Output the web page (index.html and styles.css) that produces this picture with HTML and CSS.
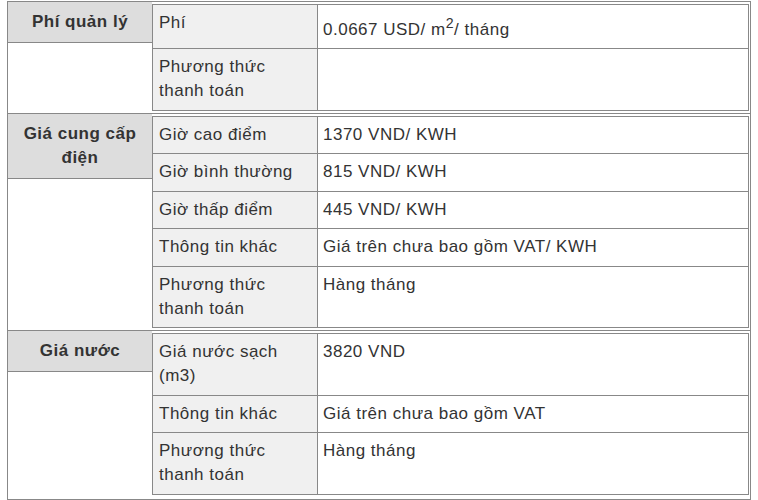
FILE: index.html
```html
<!DOCTYPE html>
<html lang="vi">
<head>
<meta charset="utf-8">
<title>Bảng phí</title>
<link rel="stylesheet" href="styles.css">
</head>
<body>
<div class="sheet">
  <section class="group">
    <div class="label">Phí quản lý</div>
    <div class="detail">
      <div class="key">Phí</div>
      <div class="val">0.0667 USD/ m<sup>2</sup>/ tháng</div>
      <div class="key">Phương thức thanh toán</div>
      <div class="val"></div>
    </div>
  </section>
  <section class="group">
    <div class="label">Giá cung cấp điện</div>
    <div class="detail">
      <div class="key">Giờ cao điểm</div>
      <div class="val">1370 VND/ KWH</div>
      <div class="key">Giờ bình thường</div>
      <div class="val">815 VND/ KWH</div>
      <div class="key">Giờ thấp điểm</div>
      <div class="val">445 VND/ KWH</div>
      <div class="key">Thông tin khác</div>
      <div class="val">Giá trên chưa bao gồm VAT/ KWH</div>
      <div class="key">Phương thức thanh toán</div>
      <div class="val">Hàng tháng</div>
    </div>
  </section>
  <section class="group">
    <div class="label">Giá nước</div>
    <div class="detail">
      <div class="key">Giá nước sạch (m3)</div>
      <div class="val">3820 VND</div>
      <div class="key">Thông tin khác</div>
      <div class="val">Giá trên chưa bao gồm VAT</div>
      <div class="key">Phương thức thanh toán</div>
      <div class="val">Hàng tháng</div>
    </div>
  </section>
</div>
</body>
</html>
```

FILE: styles.css
```css
* {
  box-sizing: border-box;
}

body {
  margin: 0;
  background: #fff;
  font-family: "Liberation Sans", Arial, sans-serif;
  font-size: 17px;
  letter-spacing: 0.5px;
  color: #333;
}

.sheet {
  width: 744px;
  margin: 1px 0 0 7px;
  border: 1px solid #888;
  border-top: 0;
  padding-bottom: 2px;
}

.group {
  display: flex;
  align-items: flex-start;
  border-top: 1px solid #888;
}

.label {
  flex: 0 0 144px;
  background: #ddd;
  border-bottom: 1px solid #888;
  padding: 8px 4px 8px;
  text-align: center;
  font-weight: bold;
  line-height: 24px;
  color: #333;
}

.detail {
  width: 597px;
  margin: 2px 0;
  display: grid;
  grid-template-columns: 165px 1fr;
  border-top: 1px solid #888;
  border-left: 1px solid #888;
  line-height: 24px;
}

.key,
.val {
  border-right: 1px solid #888;
  border-bottom: 1px solid #888;
  padding: 6px 6px 6.5px;
}

.key {
  background: #f0f0f0;
  padding-right: 14px;
}

.val {
  padding-left: 5px;
}
```
